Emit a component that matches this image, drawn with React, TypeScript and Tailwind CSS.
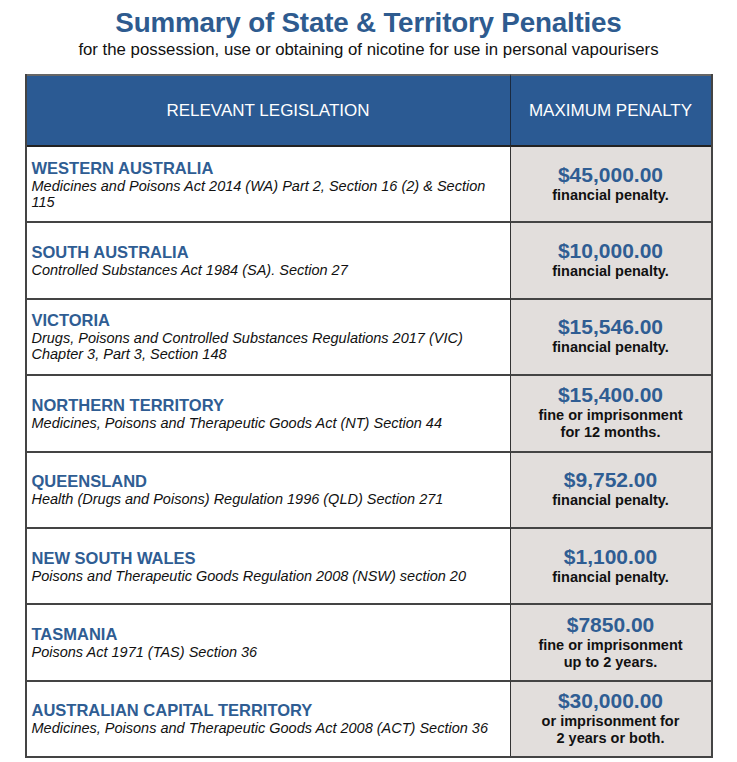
import React from "react";

type Row = {
  name: string;
  act: string;
  amount: string;
  note: string[];
};

const rows: Row[] = [
  {
    name: "WESTERN AUSTRALIA",
    act: "Medicines and Poisons Act 2014 (WA) Part 2, Section 16 (2) & Section 115",
    amount: "$45,000.00",
    note: ["financial penalty."],
  },
  {
    name: "SOUTH AUSTRALIA",
    act: "Controlled Substances Act 1984 (SA). Section 27",
    amount: "$10,000.00",
    note: ["financial penalty."],
  },
  {
    name: "VICTORIA",
    act: "Drugs, Poisons and Controlled Substances Regulations 2017 (VIC) Chapter 3, Part 3, Section 148",
    amount: "$15,546.00",
    note: ["financial penalty."],
  },
  {
    name: "NORTHERN TERRITORY",
    act: "Medicines, Poisons and Therapeutic Goods Act (NT) Section 44",
    amount: "$15,400.00",
    note: ["fine or imprisonment", "for 12 months."],
  },
  {
    name: "QUEENSLAND",
    act: "Health (Drugs and Poisons) Regulation 1996 (QLD) Section 271",
    amount: "$9,752.00",
    note: ["financial penalty."],
  },
  {
    name: "NEW SOUTH WALES",
    act: "Poisons and Therapeutic Goods Regulation 2008 (NSW) section 20",
    amount: "$1,100.00",
    note: ["financial penalty."],
  },
  {
    name: "TASMANIA",
    act: "Poisons Act 1971 (TAS) Section 36",
    amount: "$7850.00",
    note: ["fine or imprisonment", "up to 2 years."],
  },
  {
    name: "AUSTRALIAN CAPITAL TERRITORY",
    act: "Medicines, Poisons and Therapeutic Goods Act 2008 (ACT) Section 36",
    amount: "$30,000.00",
    note: ["or imprisonment for", "2 years or both."],
  },
];

export default function App() {
  return (
    <div
      className="w-[737px] h-[762px] bg-white flex flex-col items-center overflow-hidden"
      style={{ fontFamily: '"Liberation Sans", Arial, sans-serif' }}
    >
      <h1 className="mt-[6px] text-[27.8px] leading-[33px] font-bold text-[#2e5b8f] tracking-[-0.2px]">
        Summary of State &amp; Territory Penalties
      </h1>
      <p className="text-[16.8px] leading-[20px] text-[#111] mt-[1px]">
        for the possession, use or obtaining of nicotine for use in personal vapourisers
      </p>
      <div className="mt-[14px] w-[688px] border-x-2 border-b-2 border-[#444] grid grid-cols-[484px_1fr]">
        <div className="h-[71px] bg-[#2b5a93] border-t-2 border-[#666] border-r border-r-[#1a2a40] flex items-center justify-center text-white text-[17px]">
          RELEVANT LEGISLATION
        </div>
        <div className="h-[71px] bg-[#2b5a93] border-t-2 border-[#666] flex items-center justify-center text-white text-[17px]">
          MAXIMUM PENALTY
        </div>
        {rows.map((r, i) => (
          <React.Fragment key={r.name}>
            <div
              className={`h-[76.4px] flex flex-col justify-center pl-[5px] pr-[12px] border-r border-[#333] ${
                i === 0 ? "border-t-2 border-t-[#222]" : "border-t-2 border-t-[#444]"
              }`}
            >
              <div className="text-[16.5px] leading-[19px] font-bold text-[#2f5d93]">{r.name}</div>
              <div className="text-[14.5px] leading-[16px] italic text-[#111]">{r.act}</div>
            </div>
            <div
              className={`h-[76.4px] bg-[#e2dedc] flex flex-col items-center justify-center ${
                i === 0 ? "border-t-2 border-t-[#222]" : "border-t-2 border-t-[#444]"
              }`}
            >
              <div className="text-[21px] leading-[24px] font-bold text-[#2f5d93] -mt-[2px]">{r.amount}</div>
              {r.note.map((n) => (
                <div key={n} className="text-[14.5px] leading-[17px] font-bold text-[#111]">
                  {n}
                </div>
              ))}
            </div>
          </React.Fragment>
        ))}
      </div>
    </div>
  );
}
